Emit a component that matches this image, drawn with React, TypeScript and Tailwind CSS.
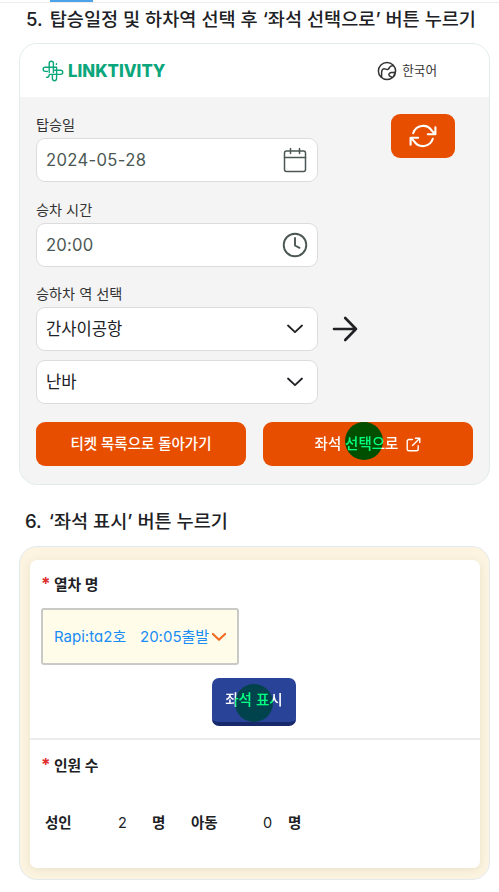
import React from "react";

function LinkMark() {
  return (
    <svg width="22" height="22" viewBox="0 0 22 22" fill="none" stroke="#0ba67c" strokeWidth="1.4" strokeLinecap="round" strokeLinejoin="round">
      <path d="M7.2 12.6V3.4a2.1 2.1 0 0 1 4.2 0v9.2" />
      <path d="M14.6 7.4v11.2a2.1 2.1 0 0 1-4.2 0v-4" />
      <path d="M14.4 7.3H3.2a2 2 0 0 0 0 4.1h2.2" />
      <path d="M7.4 14.4h11.3a2 2 0 0 0 0-4.1h-6" />
      <path d="M14.4 3.6v.8M4.6 17.4c1.6 0 2.6-.8 2.6-2.4" />
    </svg>
  );
}

function Globe() {
  return (
    <svg width="20" height="20" viewBox="0 0 20 20" fill="none" stroke="#333" strokeWidth="1.5" strokeLinejoin="round" strokeLinecap="round">
      <circle cx="10" cy="10" r="8.6" />
      <path d="M4.6 16.2V12c0-2.4.8-4 2.4-4.2 1.4-.2 2 .8 3.4.6 2-.3 1.8-2.4 3.4-3.2 1-.5 1.6-.5 2.4-.4" />
      <path d="M18.2 11.2c-1.6-.2-2.6.5-3.8.4-1.6 0-2.6 1-2.5 2.2.1 1.3 1.2 1.8 2.2 2 .6.2.6.8.6 1.2M16.4 15.6c1-.6 1.3-1.7 1-2.6" />
    </svg>
  );
}

function Chevron({ className = "" }: { className?: string }) {
  return (
    <svg width="16" height="10" viewBox="0 0 16 10" fill="none" stroke="currentColor" strokeLinecap="round" strokeLinejoin="round" className={className}>
      <path d="M1 1.5L8 8.2L15 1.5" />
    </svg>
  );
}

const field = "flex h-11 w-[282px] items-center justify-between rounded-[9px] border-[1.5px] border-[#dcdcdf] bg-white pl-[9px] text-[16.6px]";
const label = "h-[24px] text-[14.2px] leading-[21px] text-[#333]";

function Required({ children }: { children: string }) {
  return (
    <div className="flex items-start text-[14.8px] font-bold leading-[22px]">
      <span className="w-[13px] text-[17px] leading-[20px] text-[#e02d2d]">*</span>
      <span>{children}</span>
    </div>
  );
}

export default function App() {
  return (
    <div className="h-[892px] w-[499px] overflow-hidden whitespace-nowrap bg-white font-['Inter','Noto_Sans_CJK_KR',sans-serif] text-[#202124]">
      <div className="h-[3px] border-b border-[#ececee]">
        <div className="ml-[50px] h-[2px] w-[43px] bg-[#4da3ea]" />
      </div>
      <h2 className="flex h-[40px] gap-[7px] pl-[26px] pt-[2px] text-[18.6px] font-medium leading-[28px]">
        <span>5.</span>
        <span>탑승일정 및 하차역 선택 후 ‘좌석 선택으로’ 버튼 누르기</span>
      </h2>

      <section className="ml-[19px] h-[442px] w-[471px] overflow-hidden rounded-[18px] border border-[#e2eceb] bg-[#f4f4f4]">
        <header className="flex h-[53px] items-center justify-between bg-white pl-[22px] pr-[52px]">
          <div className="flex items-center gap-[4px] text-[#0ba67c]">
            <LinkMark />
            <span className="text-[16.8px] font-extrabold leading-[22px]">LINKTIVITY</span>
          </div>
          <div className="flex items-center gap-[5px] text-[#333]">
            <Globe />
            <span className="text-[12.6px] leading-[20px]">한국어</span>
          </div>
        </header>

        <div className="pl-[16px]">
          <div className="flex justify-between pr-[34px]">
            <div className="h-[85px] pt-[17px]">
              <div className={label}>탑승일</div>
              <div className={`${field} pr-[10px] text-[#4b5754]`}>
                <span className="tracking-[0.35px]">2024-05-28</span>
                <svg width="24" height="26" viewBox="0 0 24 26" fill="none" stroke="currentColor" strokeWidth="1.5" strokeLinecap="round">
                  <rect x="1.5" y="4" width="21" height="20.5" rx="2" />
                  <path d="M1.5 10.5h21M7.5 1.5v5M16.5 1.5v5" />
                </svg>
              </div>
            </div>
            <button className="mt-[17px] flex h-[44px] w-[64px] items-center justify-center rounded-[9px] bg-[#e84e00] text-white">
              <svg width="28" height="24" viewBox="0 0 28 24" fill="none" stroke="currentColor" strokeWidth="2.1" strokeLinecap="round" strokeLinejoin="round">
                <path d="M4.2 9.2A10.4 10.4 0 0 1 22.8 6.6L26 10M26.4 3.2V10.2H18.8M23.8 14.8A10.4 10.4 0 0 1 5.2 17.4L2 14M1.6 20.8V13.8H9.2" />
              </svg>
            </button>
          </div>

          <div className="h-[85px] pt-[17px]">
            <div className={label}>승차 시간</div>
            <div className={`${field} pr-[9px] text-[#4b5754]`}>
              <span className="tracking-[0.2px]">20:00</span>
              <svg width="26" height="26" viewBox="0 0 26 26" fill="none" stroke="currentColor" strokeWidth="1.9" strokeLinecap="round" strokeLinejoin="round">
                <circle cx="13" cy="13" r="11.3" />
                <path d="M13 6v7.5l4.5 2.3" />
              </svg>
            </div>
          </div>

          <div className="pt-[16px]">
            <div className={label}>승하차 역 선택</div>
            <div className="flex items-center gap-[14px]">
              <div className={`${field} pr-[14px]`}><span className="pt-[1px]">간사이공항</span><Chevron className="stroke-[1.8]" /></div>
              <svg width="26" height="26" viewBox="0 0 26 26" fill="none" stroke="currentColor" strokeWidth="2.6" strokeLinecap="round" strokeLinejoin="round">
                <path d="M2 13h22M13.2 2l10.8 11l-10.8 11" />
              </svg>
            </div>
            <div className={`${field} mt-[9px] pr-[14px]`}><span className="pt-[1px]">난바</span><Chevron className="stroke-[1.8]" /></div>
          </div>

          <div className="mt-[18px] flex gap-[17px] text-[14.5px] font-medium text-white">
            <button className="h-[44px] w-[210px] rounded-[9px] bg-[#e84e00]">티켓 목록으로 돌아가기</button>
            <button className="relative isolate flex h-[44px] w-[210px] items-center justify-center gap-[8px] rounded-[9px] bg-[#e84e00]">
              <span>좌석 선택으로</span>
              <svg width="15" height="15" viewBox="0 0 15 15" fill="none" stroke="currentColor" strokeWidth="1.4" strokeLinecap="round" strokeLinejoin="round">
                <path d="M6.5 2.5H3A1.8 1.8 0 0 0 1.2 4.3V12A1.8 1.8 0 0 0 3 13.8h7.4a1.8 1.8 0 0 0 1.8-1.8V8.7M9.5 1.2h4.3v4.3M13.6 1.4L6.5 8.4" />
              </svg>
              <span className="absolute left-[82px] top-0 size-[38px] rounded-full bg-[#00ff80] mix-blend-multiply" />
            </button>
          </div>
        </div>
      </section>

      <h2 className="flex h-[61px] gap-[7px] pl-[25px] pt-[22px] text-[18.6px] font-medium leading-[28px]">
        <span>6.</span>
        <span>‘좌석 표시’ 버튼 누르기</span>
      </h2>

      <section className="ml-[19px] h-[334px] w-[471px] rounded-[18px] border border-[#e2eaed] bg-[#fcf4e0] pl-[10px] pt-[13px]">
        <div className="h-[308px] w-[450px] rounded-[7px] bg-white shadow-[0_2px_10px_rgba(80,65,20,0.10)]">
          <div className="h-[180px] border-b-2 border-[#ececed] pl-[11px] pt-[14px]">
            <Required>열차 명</Required>
            <div className="mt-[12px] flex h-[57px] w-[198px] items-center rounded-[3px] border-2 border-[#c9c9c6] bg-[#fffcea] pl-[11px] pt-[1px] text-[15px] text-[#198cf5]">
              <span className="w-[86px]">Rapi:tɑ2호</span>
              <span className="w-[72px]">20:05출발</span>
              <Chevron className="w-[14px] stroke-[2.4] text-[#f36b21]" />
            </div>
            <button className="relative isolate ml-[171px] mt-[12.5px] flex h-[48px] w-[84px] items-center justify-center overflow-hidden rounded-[7px] border-b-[4px] border-[#17296b] bg-[#294399] pt-[3px] text-[14.6px] font-medium text-white">
              <span>좌석 표시</span>
              <span className="absolute left-[23px] top-[6px] size-[38px] rounded-full bg-[#00ff80] mix-blend-multiply" />
            </button>
          </div>
          <div className="pl-[11px] pt-[15px]">
            <Required>인원 수</Required>
            <div className="flex pl-[4px] pt-[35px] text-[14.5px] font-bold leading-[22px]">
              <span className="w-[73px]">성인</span>
              <span className="w-[34px] font-normal">2</span>
              <span className="w-[39px]">명</span>
              <span className="w-[72px]">아동</span>
              <span className="w-[25px] font-normal">0</span>
              <span>명</span>
            </div>
          </div>
        </div>
      </section>
    </div>
  );
}
